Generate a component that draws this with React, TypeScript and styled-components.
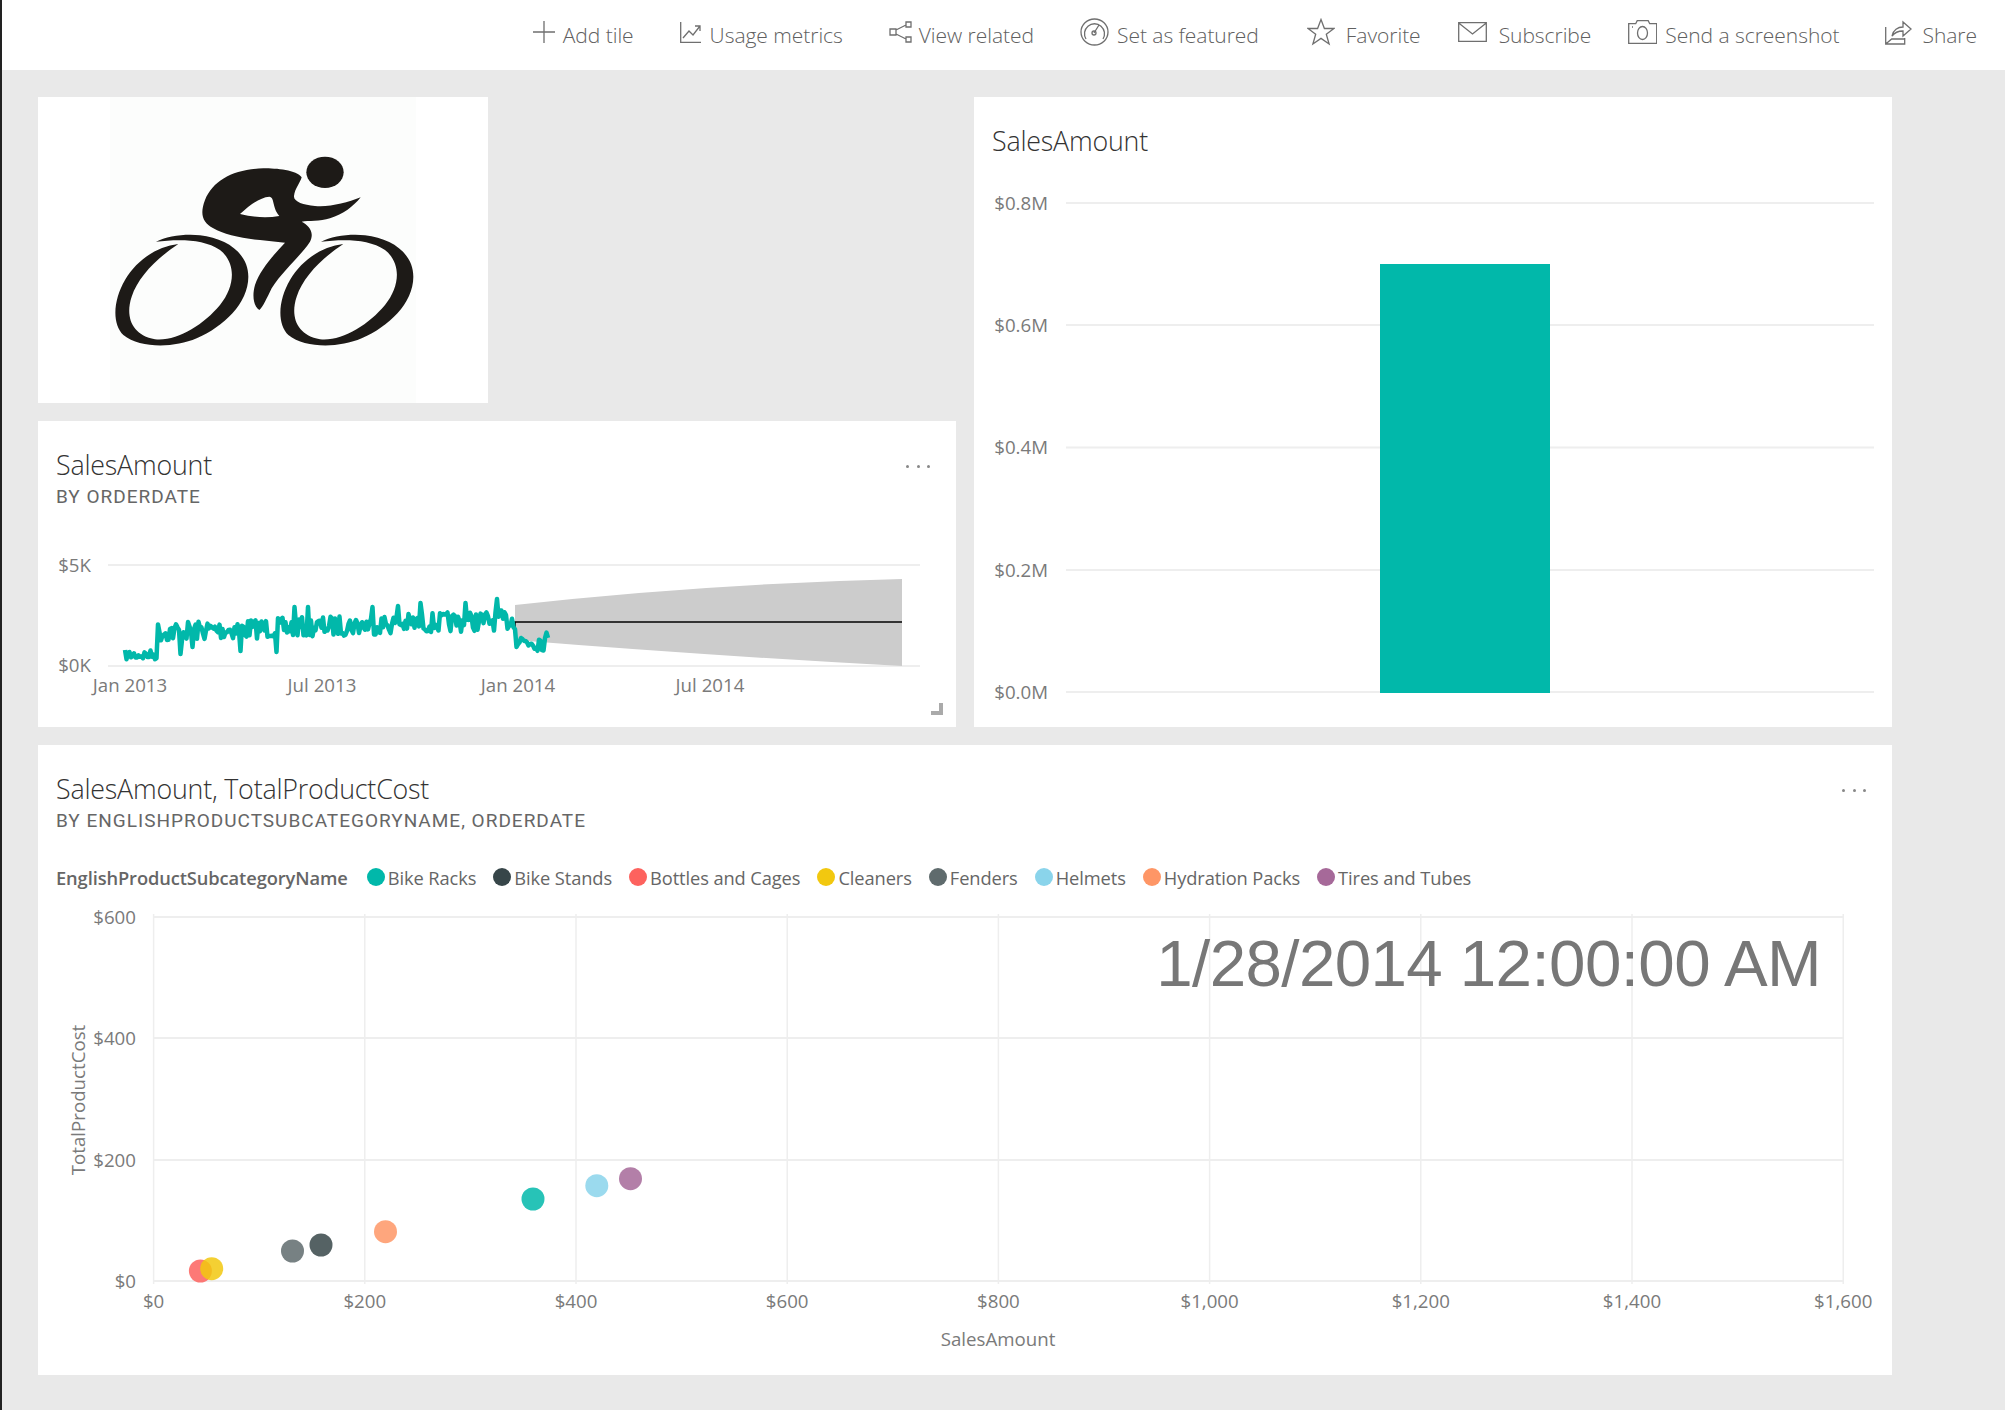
import styled, { createGlobalStyle } from "styled-components";

const GlobalStyle = createGlobalStyle`
  html, body {
    margin: 0;
    padding: 0;
    background: #e9e9e9;
    font-family: "Open Sans", "Liberation Sans", sans-serif;
  }
`;

const Page = styled.div`
  width: 2005px;
  height: 1410px;
  box-sizing: border-box;
  border-left: 2px solid #222;
  background: #e9e9e9;
  overflow: hidden;
`;

const Toolbar = styled.header`
  height: 70px;
  background: #fff;
  display: flex;
  align-items: center;
  justify-content: flex-end;
  padding-right: 28px;
`;

const ToolItem = styled.div<{ $before: number; $gap: number }>`
  display: flex;
  align-items: center;
  gap: ${(p) => p.$gap}px;
  margin-left: ${(p) => p.$before}px;
  color: #606060;
  font-size: 21px;
  font-weight: 300;
  letter-spacing: -0.04px;
  svg {
    flex: none;
    margin-bottom: 6px;
    fill: none;
    stroke: #6f6f6f;
    stroke-width: 1.3;
  }
`;

const Board = styled.main`
  display: grid;
  grid-template-columns: 918px 918px;
  grid-template-rows: 630px 630px;
  gap: 18px;
  padding: 27px 0 0 36px;
`;

const LeftColumn = styled.div`
  display: flex;
  flex-direction: column;
  gap: 18px;
`;

const Tile = styled.section<{ $wide?: boolean; $grow?: boolean }>`
  position: relative;
  background: #fff;
  overflow: hidden;
  display: flex;
  flex-direction: column;
  grid-column: ${(p) => (p.$wide ? "1 / span 2" : "auto")};
  flex: ${(p) => (p.$grow ? "1" : "none")};
`;

const LogoTile = styled.section`
  width: 450px;
  height: 306px;
  background: #fff;
  svg {
    display: block;
  }
`;

const TileHeader = styled.div`
  padding: 26px 18px 0;
`;

const TileTitle = styled.h2`
  margin: 0;
  color: #333;
  font-size: 26.8px;
  font-weight: 300;
  line-height: 36px;
  letter-spacing: -0.2px;
`;

const TileSubtitle = styled.div`
  margin-top: 3px;
  color: #666;
  font-family: Roboto, "Liberation Sans", sans-serif;
  font-size: 19px;
  line-height: 22px;
  letter-spacing: 1px;
`;

const MoreMenu = styled.div`
  position: absolute;
  top: 44px;
  right: 26px;
  display: flex;
  gap: 7.5px;
  span {
    width: 3px;
    height: 3px;
    border-radius: 50%;
    background: #888;
  }
`;

const ResizeHandle = styled.div`
  position: absolute;
  right: 13px;
  bottom: 12px;
  width: 8px;
  height: 8px;
  border-right: 4px solid #aaa;
  border-bottom: 4px solid #aaa;
`;

const Legend = styled.div`
  display: flex;
  align-items: center;
  gap: 17px;
  height: 24px;
  margin-top: 33px;
  padding-left: 18px;
  color: #666;
  font-size: 18.3px;
  letter-spacing: -0.1px;
`;

const LegendTitle = styled.div`
  margin-right: 2px;
  font-weight: 600;
`;

const LegendEntry = styled.div`
  display: flex;
  align-items: center;
  gap: 3px;
`;

const LegendDot = styled.span<{ $color: string }>`
  width: 18px;
  height: 18px;
  border-radius: 50%;
  background: ${(p) => p.$color};
`;

const Chart = styled.svg`
  display: block;
  flex: none;
  margin-top: auto;
  font-family: "Open Sans", "Liberation Sans", sans-serif;
  font-size: 18.7px;
  fill: #7a7a7a;
`;

const BigDate = styled.text`
  font-family: "Liberation Sans", Arial, sans-serif;
  font-size: 65.5px;
  letter-spacing: -0.6px;
  fill: #777;
`;

const GRID = "#eeeeee";
const TEAL = "#01b8aa";

const tools = [
  { label: "Add tile", before: 0, gap: 8, icon: (
    <svg width="22" height="22" viewBox="0 0 22 22"><path d="M11 0v22M0 11h22" /></svg>
  ) },
  { label: "Usage metrics", before: 46, gap: 9, icon: (
    <svg width="21" height="21" viewBox="0 0 21 21"><path d="M.7 0v20.3H21M3 16l6-7 4 4 7-9M15 4h5v5" /></svg>
  ) },
  { label: "View related", before: 46, gap: 7, icon: (
    <svg width="23" height="22" viewBox="0 0 23 22"><path d="M1 8h6v6H1zM17 1h5v5h-5zM17 16h5v5h-5zM7 9l10-5M7 13l10 5" /></svg>
  ) },
  { label: "Set as featured", before: 46, gap: 8, icon: (
    <svg width="29" height="28" viewBox="0 0 29 28"><ellipse cx="14.5" cy="14" rx="13.5" ry="13" /><path d="M6 21A10 10 0 1 1 23 21M14 15l5-8" /><circle cx="14" cy="15" r="2" /></svg>
  ) },
  { label: "Favorite", before: 48, gap: 11, icon: (
    <svg width="28" height="28" viewBox="0 0 28 28"><path d="M14 1.5l3.4 9h9.6l-7.7 5.8 2.8 9.7L14 20.4 5.9 26l2.8-9.7L1 10.5h9.6z" /></svg>
  ) },
  { label: "Subscribe", before: 37, gap: 12, icon: (
    <svg width="29" height="20" viewBox="0 0 29 20"><path d="M.7.7h27.6v18.6H.7zM.7 1l13.8 11L28.300 1" /></svg>
  ) },
  { label: "Send a screenshot", before: 37, gap: 8, icon: (
    <svg width="29" height="24" viewBox="0 0 29 24"><path d="M.7 3.700h7l1.500-3h11l1.500 3h7v19.600H.7z" /><ellipse cx="14.500" cy="13" rx="5" ry="6.500" /><path d="M4 7h1" /></svg>
  ) },
  { label: "Share", before: 45, gap: 11, icon: (
    <svg width="27" height="26" viewBox="0 0 27 26"><path d="M.7 8v17h19v-6M.7 25l6-5h13M7 17c1-6 6-9 11-9V3l8 7-8 7v-5c-4 0-8 1-11 5z" /></svg>
  ) },
];

const legendEntries = [
  { name: "Bike Racks", color: "#01b8aa" },
  { name: "Bike Stands", color: "#374649" },
  { name: "Bottles and Cages", color: "#fd625e" },
  { name: "Cleaners", color: "#f2c80f" },
  { name: "Fenders", color: "#5f6b6d" },
  { name: "Helmets", color: "#8ad4eb" },
  { name: "Hydration Packs", color: "#fe9666" },
  { name: "Tires and Tubes", color: "#a66999" },
];

// x, y of each bubble, in page coordinates
const bubbles = [
  { x: 200.4, y: 1271, color: "#fd625e" },
  { x: 211.7, y: 1268.7, color: "#f2c80f" },
  { x: 292.5, y: 1251, color: "#5f6b6d" },
  { x: 321, y: 1245, color: "#374649" },
  { x: 385.5, y: 1231.7, color: "#fe9666" },
  { x: 533, y: 1199, color: "#01b8aa" },
  { x: 596.8, y: 1185.7, color: "#8ad4eb" },
  { x: 630.5, y: 1178.7, color: "#a66999" },
];

// spikes read off the chart: x, y
const spikes: [number, number][] = [
  [181, 654], [192, 647], [240, 651], [277, 652], [295, 607], [308, 607],
  [373, 607], [398, 606], [420, 603], [466, 603], [497, 599],
];

function salesLine() {
  let seed = 7;
  const rand = () => {
    seed = (seed * 16807) % 2147483647;
    return seed / 2147483647;
  };
  const points: string[] = [];
  for (let x = 125; x <= 548; x += 1.5) {
    let base = 655;
    if (x > 157) base = 632 - ((x - 157) / 358) * 12;
    if (x > 515) base = 641;
    const amp = x < 157 ? 5 : 10;
    let y = base + (rand() - 0.5) * 2 * amp;
    const spike = spikes.find((s) => Math.abs(s[0] - x) < 0.8);
    if (spike) y = spike[1];
    points.push(`${x.toFixed(1)},${y.toFixed(1)}`);
  }
  return points.join(" ");
}

function BikeLogo() {
  const wheel =
    "M468 455C500 438 560 430 600 436C680 445 745 490 745 560C745 640 670 710 590 745C520 775 420 775 370 735C335 700 340 630 375 570C410 510 470 470 535 462C470 505 415 560 395 620C375 680 395 735 465 748C530 755 610 705 660 645C705 590 710 520 660 480C610 445 530 448 468 455Z";
  return (
    <svg width="450" height="306" viewBox="114 21 1350 918">
      <rect x="330" y="21" width="918" height="918" fill="#fcfdfc" />
      <g fill="#1d1a17">
        <ellipse cx="975" cy="247" rx="56" ry="47" />
        <path d="M905 262C890 240 830 235 790 235C700 238 640 270 615 330C600 370 605 395 640 415C670 432 720 445 780 450L855 458C820 495 780 540 765 585C755 620 762 650 778 660C790 650 800 625 815 595C850 540 900 500 930 455C945 425 925 405 905 395C925 392 960 395 990 385C1030 372 1060 350 1082 322C1040 338 990 352 945 348C910 345 880 335 882 318C885 295 900 280 905 262ZM720 372C750 345 780 322 808 320C825 322 815 350 838 378C800 385 760 382 720 372Z" fillRule="evenodd" />
        <path d={wheel} />
        <path d={wheel} transform="translate(495 0)" />
      </g>
    </svg>
  );
}

function LineChart() {
  return (
    <Chart width="918" height="206" viewBox="38 521 918 206">
      <path d="M108 565H920M108 666H920" stroke={GRID} strokeWidth="2" fill="none" />
      <text x="91" y="564" textAnchor="end" dominantBaseline="central">$5K</text>
      <text x="91" y="664.500" textAnchor="end" dominantBaseline="central">$0K</text>
      <path d="M515 605Q700 584 902 579V666Q700 655 515 640Z" fill="#cccccc" />
      <path d="M515 631V622H902" stroke="#000" strokeWidth="1.6" fill="none" />
      <polyline points={salesLine()} fill="none" stroke={TEAL} strokeWidth="4.500" strokeLinejoin="round" />
      <text x="130" y="692" textAnchor="middle">Jan 2013</text>
      <text x="322" y="692" textAnchor="middle">Jul 2013</text>
      <text x="518" y="692" textAnchor="middle">Jan 2014</text>
      <text x="710" y="692" textAnchor="middle">Jul 2014</text>
    </Chart>
  );
}

function BarChart() {
  const ticks = [
    { label: "$0.8M", y: 203 },
    { label: "$0.6M", y: 325 },
    { label: "$0.4M", y: 447.500 },
    { label: "$0.2M", y: 570 },
    { label: "$0.0M", y: 692 },
  ];
  return (
    <Chart width="918" height="560" viewBox="974 167 918 560">
      {ticks.map((t) => (
        <g key={t.label}>
          <line x1="1066" x2="1874" y1={t.y} y2={t.y} stroke={GRID} strokeWidth="2" />
          <text x="1048" y={t.y - 1} textAnchor="end" dominantBaseline="central">{t.label}</text>
        </g>
      ))}
      <rect x="1380" y="264" width="170" height="429" fill={TEAL} />
    </Chart>
  );
}

function ScatterChart() {
  const xTicks = ["$0", "$200", "$400", "$600", "$800", "$1,000", "$1,200", "$1,400", "$1,600"];
  const yTicks = [
    { label: "$600", y: 917 },
    { label: "$400", y: 1038 },
    { label: "$200", y: 1160 },
    { label: "$0", y: 1281 },
  ];
  return (
    <Chart width="1854" height="475" viewBox="38 900 1854 475">
      {yTicks.map((t) => (
        <g key={t.label}>
          <line x1="153" x2="1843" y1={t.y} y2={t.y} stroke={GRID} strokeWidth="2" />
          <text x="136" y={t.y - 1} textAnchor="end" dominantBaseline="central">{t.label}</text>
        </g>
      ))}
      {xTicks.map((t, i) => {
        const x = 153.6 + i * 211.2;
        return (
          <g key={t}>
            <line x1={x} x2={x} y1="914" y2="1284" stroke={GRID} strokeWidth="1.500" />
            <text x={x} y="1300" textAnchor="middle" dominantBaseline="central">{t}</text>
          </g>
        );
      })}
      <text x="998" y="1338" textAnchor="middle" dominantBaseline="central">SalesAmount</text>
      <text transform="translate(77 1100) rotate(-90)" textAnchor="middle" dominantBaseline="central">TotalProductCost</text>
      <BigDate x="1821" y="986" textAnchor="end">1/28/2014 12:00:00 AM</BigDate>
      {bubbles.map((b) => (
        <circle key={b.color} cx={b.x} cy={b.y} r="11.500" fill={b.color} fillOpacity="0.85" />
      ))}
    </Chart>
  );
}

function Dots() {
  return (
    <MoreMenu>
      <span />
      <span />
      <span />
    </MoreMenu>
  );
}

export default function App() {
  return (
    <>
      <GlobalStyle />
      <Page>
        <Toolbar>
          {tools.map((t) => (
            <ToolItem key={t.label} $before={t.before} $gap={t.gap}>
              {t.icon}
              {t.label}
            </ToolItem>
          ))}
        </Toolbar>
        <Board>
          <LeftColumn>
            <LogoTile>
              <BikeLogo />
            </LogoTile>
            <Tile $grow>
              <TileHeader>
                <TileTitle>SalesAmount</TileTitle>
                <TileSubtitle>BY ORDERDATE</TileSubtitle>
              </TileHeader>
              <Dots />
              <LineChart />
              <ResizeHandle />
            </Tile>
          </LeftColumn>
          <Tile>
            <TileHeader>
              <TileTitle>SalesAmount</TileTitle>
            </TileHeader>
            <BarChart />
          </Tile>
          <Tile $wide>
            <TileHeader>
              <TileTitle>SalesAmount, TotalProductCost</TileTitle>
              <TileSubtitle>BY ENGLISHPRODUCTSUBCATEGORYNAME, ORDERDATE</TileSubtitle>
            </TileHeader>
            <Dots />
            <Legend>
              <LegendTitle>EnglishProductSubcategoryName</LegendTitle>
              {legendEntries.map((e) => (
                <LegendEntry key={e.name}>
                  <LegendDot $color={e.color} />
                  {e.name}
                </LegendEntry>
              ))}
            </Legend>
            <ScatterChart />
          </Tile>
        </Board>
      </Page>
    </>
  );
}
